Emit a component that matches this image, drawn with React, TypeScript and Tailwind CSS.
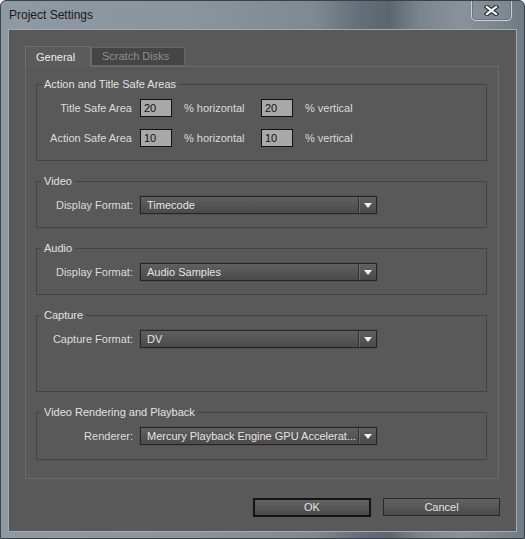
import React from 'react';

function Group({ title, children, className = '' }: { title: string; children: React.ReactNode; className?: string }) {
  return (
    <fieldset className={`border border-[#434343] px-0 pt-[8px] ${className}`}>
      <legend className="ml-[4px] px-[3px] leading-[14px] text-[#e2e2e2]">{title}</legend>
      {children}
    </fieldset>
  );
}

function NumBox({ value }: { value: string }) {
  return (
    <div className="w-[32px] h-[18px] bg-[#a9a9a9] border border-[#111] text-[#111] pl-[3px] leading-[16px]">
      {value}
    </div>
  );
}

function Dropdown({ value }: { value: string }) {
  return (
    <div className="ml-[7px] w-[237px] h-[18px] flex border border-[#262626] bg-[linear-gradient(#606060,#4a4a4a)] shadow-[0_0_0_1px_#505050]">
      <div className="flex-1 pl-[6px] leading-[16px] text-[#e4e4e4] whitespace-nowrap overflow-hidden">{value}</div>
      <div className="w-[18px] border-l border-[#333] shadow-[inset_1px_0_0_#6a6a6a] flex items-center justify-center">
        <svg width="8" height="5" viewBox="0 0 8 5">
          <path d="M0 0 L8 0 L4 5 Z" fill="#f2f2f2" />
        </svg>
      </div>
    </div>
  );
}

function SelectRow({ label, value }: { label: string; value: string }) {
  return (
    <div className="flex items-center h-[18px]">
      <div className="w-[96px] text-right text-[#dcdcdc]">{label}</div>
      <Dropdown value={value} />
    </div>
  );
}

function SafeRow({ label, h, v }: { label: string; h: string; v: string }) {
  return (
    <div className="flex items-center h-[18px]">
      <div className="w-[95px] text-right text-[#dcdcdc]">{label}</div>
      <div className="ml-[8px]">
        <NumBox value={h} />
      </div>
      <div className="ml-[12px] w-[65px] text-[#dcdcdc]">% horizontal</div>
      <div className="ml-[12px]">
        <NumBox value={v} />
      </div>
      <div className="ml-[12px] text-[#dcdcdc]">% vertical</div>
    </div>
  );
}

export default function App() {
  return (
    <div className="w-[525px] h-[539px] flex flex-col rounded-t-[6px] border border-[#3a4148] bg-[linear-gradient(90deg,#8f99a1_0%,#8b959d_35%,#7f8991_60%,#66707a_68%,#5c666f_74%,#7a848d_80%,#8a939b_88%,#707a83_100%)] font-['Liberation_Sans',Arial,sans-serif] text-[11px] overflow-hidden">
      {/* title bar */}
      <div className="h-[28px] flex items-start justify-between shrink-0">
        <div className="pl-[8px] pt-[7px] text-[12px] leading-[14px] text-[#1a1a1a]">Project Settings</div>
        <div className="mr-[12px] -mt-px w-[41px] h-[21px] rounded-b-[5px] border border-t-0 border-[#c9d0d6] bg-[#8a949c]/40 shadow-[inset_0_0_0_1px_#6c757d] flex items-center justify-center">
          <svg width="15" height="11" viewBox="0 0 15 11">
            <path d="M3 2 L12 9 M12 2 L3 9" stroke="#2a2f34" strokeWidth="4.5" strokeLinecap="square" />
            <path d="M3 2 L12 9 M12 2 L3 9" stroke="#ffffff" strokeWidth="2.2" strokeLinecap="square" />
          </svg>
        </div>
      </div>

      {/* client area */}
      <div className="flex-1 mx-[7px] mb-[8px] border border-[#a3abb2] bg-[#595959] flex flex-col pt-[16px] pl-[16px] pr-[17px] pb-[14px]">
        {/* tabs */}
        <div className="flex items-end h-[20px]">
          <div className="relative z-10 -mb-px h-[21px] w-[66px] bg-[#5b5b5b] border border-b-0 border-[#6f6f6f] pl-[10px] pt-[2px] text-[#ececec]">
            General
          </div>
          <div className="h-[19px] w-[94px] bg-[#454545] border border-[#666] pl-[10px] pt-0 text-[#8e8e8e]">
            Scratch Disks
          </div>
        </div>

        {/* panel */}
        <div className="border border-[#6c6c6c] pt-[10px] pl-[10px] pr-[11px] pb-[18px] flex flex-col gap-[13px]">
          <Group title="Action and Title Safe Areas" className="pb-[13px]">
            <div className="flex flex-col gap-[12px]">
              <SafeRow label="Title Safe Area" h="20" v="20" />
              <SafeRow label="Action Safe Area" h="10" v="10" />
            </div>
          </Group>

          <Group title="Video" className="pb-[13px]">
            <SelectRow label="Display Format:" value="Timecode" />
          </Group>

          <Group title="Audio" className="pb-[13px]">
            <SelectRow label="Display Format:" value="Audio Samples" />
          </Group>

          <Group title="Capture" className="pb-[43px]">
            <SelectRow label="Capture Format:" value="DV" />
          </Group>

          <Group title="Video Rendering and Playback" className="pb-[14px]">
            <SelectRow label="Renderer:" value="Mercury Playback Engine GPU Accelerat..." />
          </Group>
        </div>

        {/* buttons */}
        <div className="mt-[19px] -mr-px flex justify-end items-start gap-[12px]">
          <button className="w-[118px] h-[19px] border-2 border-[#141414] bg-[linear-gradient(#626262,#4b4b4b)] text-[#e2e2e2] leading-[15px]">
            OK
          </button>
          <button className="w-[117px] h-[18px] border border-[#2a2a2a] bg-[linear-gradient(#626262,#4b4b4b)] text-[#e2e2e2] leading-[16px]">
            Cancel
          </button>
        </div>
      </div>
    </div>
  );
}
